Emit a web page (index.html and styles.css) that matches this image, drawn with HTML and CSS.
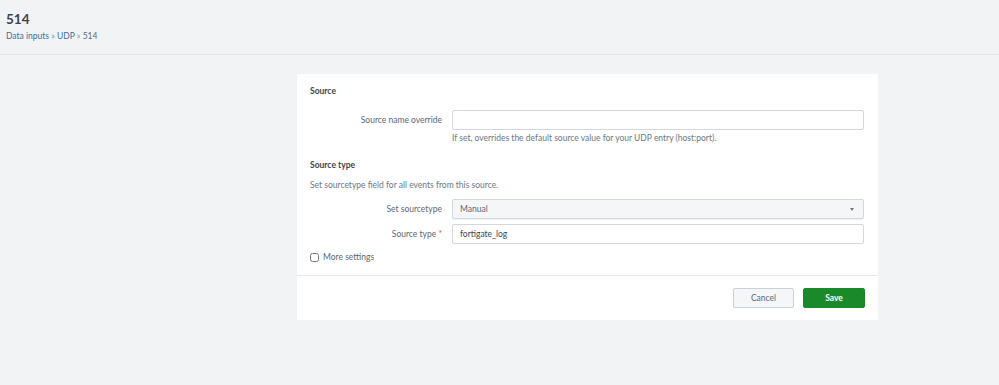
FILE: index.html
```html
<!DOCTYPE html>
<html lang="en">
<head>
  <meta charset="UTF-8" />
  <title>514</title>
  <link rel="stylesheet" href="styles.css">
</head>
<body>

  <div class="page-header">
    <h1>514</h1>
    <div class="breadcrumb">
      <a href="#">Data inputs</a> <span class="sep">&raquo;</span> <a href="#">UDP</a> <span class="sep">&raquo;</span> <span class="current">514</span>
    </div>
  </div>

  <div class="panel">
    <div class="panel-body">
      <h3>Source</h3>

      <div class="form-row">
        <label class="control-label">Source name override</label>
        <div class="controls">
          <input type="text" class="text-input" />
          <div class="help">If set, overrides the default source value for your UDP entry (host:port).</div>
        </div>
      </div>

      <h3 class="second">Source type</h3>
      <p class="section-desc">Set sourcetype field for all events from this source.</p>

      <div class="form-row">
        <label class="control-label">Set sourcetype</label>
        <div class="controls">
          <div class="select">Manual<span class="caret"></span></div>
        </div>
      </div>

      <div class="form-row">
        <label class="control-label">Source type <span class="req">*</span></label>
        <div class="controls">
          <input type="text" class="text-input" value="fortigate_log" />
        </div>
      </div>

      <label class="checkbox"><input type="checkbox" /> More settings</label>
    </div>

    <div class="panel-footer">
      <button class="btn">Cancel</button>
      <button class="btn btn-primary">Save</button>
    </div>
  </div>

</body>
</html>
```

FILE: styles.css
```css
body {
  margin: 0;
  font-family: Lato, "Liberation Sans", sans-serif;
  font-size: 8.5px;
  color: #3c444d;
  background: #f2f3f5;
  height: 385px;
}
.page-header {
  box-sizing: border-box;
  padding: 11px 6px 0;
  height: 55px;
  border-bottom: 1px solid #e1e3e6;
}
h1 {
  margin: 0;
  font-size: 13.5px;
  font-weight: bold;
  color: #3c444d;
  line-height: 16px;
}
.breadcrumb {
  margin-top: 4px;
  font-size: 8.5px;
  line-height: 11px;
  color: #5c6773;
}
.breadcrumb a {
  color: #3b6e9e;
  text-decoration: none;
}
.breadcrumb .sep {
  color: #8a939c;
}
.panel {
  margin: 19px 0 0 297px;
  width: 581px;
  background: #fff;
}
.panel-body {
  padding: 12px 14px 12px 13px;
}
h3 {
  margin: 0 0 13px;
  font-size: 8.5px;
  font-weight: bold;
  color: #3c444d;
  line-height: 11px;
}
h3.second {
  margin-top: 16px;
  margin-bottom: 9px;
}
.section-desc {
  margin: 0 0 8px;
  color: #6b7785;
  line-height: 11px;
}
.form-row {
  display: flex;
  align-items: flex-start;
  margin-bottom: 5px;
}
.control-label {
  width: 132px;
  margin-right: 10px;
  text-align: right;
  color: #5c6773;
  line-height: 20px;
}
.req {
  color: #d6563c;
}
.controls {
  flex: 1;
}
.text-input, .select {
  display: block;
  box-sizing: border-box;
  width: 100%;
  height: 20px;
  border: 1px solid #d3d8de;
  border-radius: 2px;
  padding: 0 7px;
  font-family: inherit;
  font-size: 8.5px;
  color: #3c444d;
  background: #fff;
}
.select {
  display: flex;
  align-items: center;
  justify-content: space-between;
  height: 20px;
  background: #f5f6f8;
  color: #5c6773;
  box-shadow: 0 1px 1px rgba(0,0,0,0.06);
}
.caret {
  width: 0;
  height: 0;
  border-left: 2.5px solid transparent;
  border-right: 2.5px solid transparent;
  border-top: 3px solid #6b7785;
  margin-right: 2px;
}
.help {
  margin-top: 3px;
  color: #6b7785;
  line-height: 11px;
}
.form-row:first-of-type {
  margin-bottom: 0;
}
.checkbox {
  display: flex;
  align-items: center;
  gap: 4px;
  margin-top: 8px;
  line-height: 11px;
  color: #5c6773;
}
.checkbox input {
  margin: 0;
  width: 9px;
  height: 9px;
}
.panel-footer {
  border-top: 1px solid #e6e8eb;
  padding: 12px 13px 12px 0;
  display: flex;
  justify-content: flex-end;
  gap: 9px;
}
.btn {
  width: 61px;
  height: 20px;
  font-family: inherit;
  font-size: 8.5px;
  color: #5c6773;
  background: #f5f6f8;
  border: 1px solid #c9d0d8;
  border-radius: 2px;
  cursor: pointer;
}
.btn-primary {
  width: 62px;
  background: #1a8929;
  border-color: #1a8929;
  color: #fff;
  font-weight: bold;
}
```
